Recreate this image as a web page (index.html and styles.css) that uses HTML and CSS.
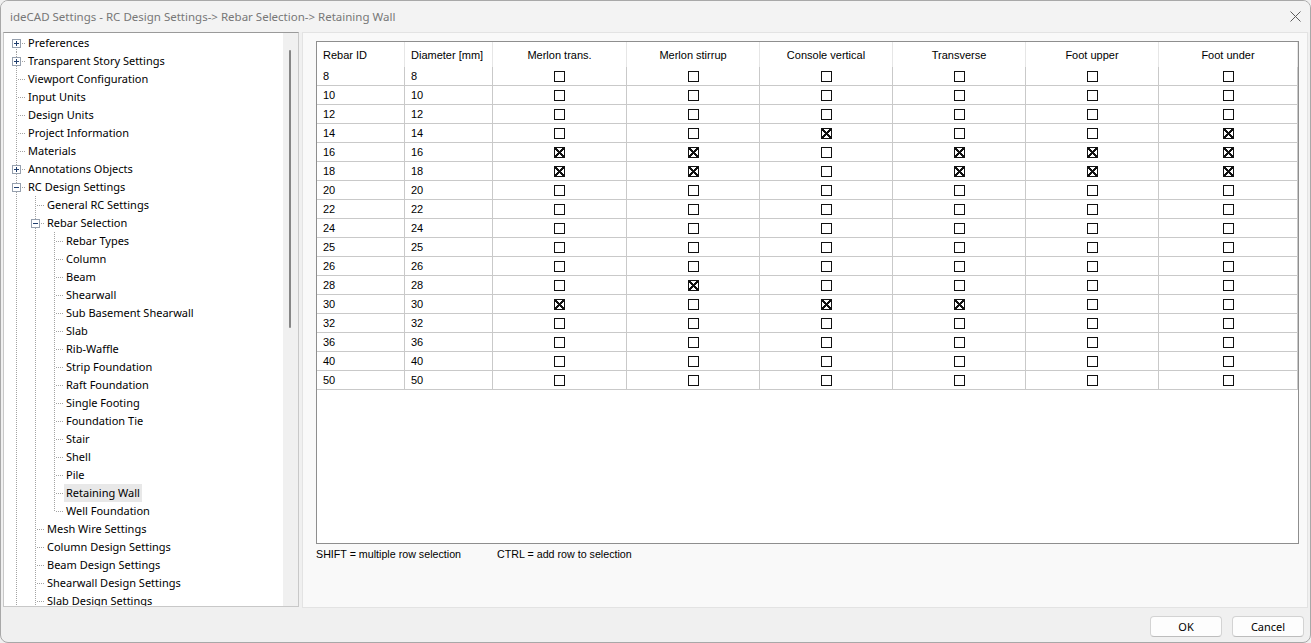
FILE: index.html
```html
<!DOCTYPE html>
<html lang="en">

<head>
    <meta charset="UTF-8" />
    <title>ideCAD Settings</title>
    <link rel="stylesheet" href="styles.css">
</head>

<body>
    <div class="window">
        <!-- Title bar -->
        <div class="titlebar">
            <span class="title">ideCAD Settings - RC Design Settings-&gt; Rebar Selection-&gt; Retaining Wall</span>
            <svg class="close" width="11" height="11" viewBox="0 0 11 11">
                <path d="M0.5 0.5 L10.5 10.5 M10.5 0.5 L0.5 10.5" stroke="#5c5c5c" stroke-width="1" fill="none" />
            </svg>
        </div>

        <div class="main">
            <!-- Settings tree -->
            <div class="tree-panel">
                <div class="tree">
                    <div class="node"><span class="g first"><i class="box plus"></i></span><span class="label">Preferences</span></div>
                    <div class="node"><span class="g tee"><i class="box plus"></i></span><span class="label">Transparent Story Settings</span></div>
                    <div class="node"><span class="g tee"></span><span class="label">Viewport Configuration</span></div>
                    <div class="node"><span class="g tee"></span><span class="label">Input Units</span></div>
                    <div class="node"><span class="g tee"></span><span class="label">Design Units</span></div>
                    <div class="node"><span class="g tee"></span><span class="label">Project Information</span></div>
                    <div class="node"><span class="g tee"></span><span class="label">Materials</span></div>
                    <div class="node"><span class="g tee"><i class="box plus"></i></span><span class="label">Annotations Objects</span></div>
                    <div class="node"><span class="g tee"><i class="box"></i></span><span class="label">RC Design Settings</span></div>
                    <div class="node"><span class="g pipe"></span><span class="g tee"></span><span class="label">General RC Settings</span></div>
                    <div class="node"><span class="g pipe"></span><span class="g tee"><i class="box"></i></span><span class="label">Rebar Selection</span></div>
                    <div class="node"><span class="g pipe"></span><span class="g pipe"></span><span class="g tee"></span><span class="label">Rebar Types</span></div>
                    <div class="node"><span class="g pipe"></span><span class="g pipe"></span><span class="g tee"></span><span class="label">Column</span></div>
                    <div class="node"><span class="g pipe"></span><span class="g pipe"></span><span class="g tee"></span><span class="label">Beam</span></div>
                    <div class="node"><span class="g pipe"></span><span class="g pipe"></span><span class="g tee"></span><span class="label">Shearwall</span></div>
                    <div class="node"><span class="g pipe"></span><span class="g pipe"></span><span class="g tee"></span><span class="label">Sub Basement Shearwall</span></div>
                    <div class="node"><span class="g pipe"></span><span class="g pipe"></span><span class="g tee"></span><span class="label">Slab</span></div>
                    <div class="node"><span class="g pipe"></span><span class="g pipe"></span><span class="g tee"></span><span class="label">Rib-Waffle</span></div>
                    <div class="node"><span class="g pipe"></span><span class="g pipe"></span><span class="g tee"></span><span class="label">Strip Foundation</span></div>
                    <div class="node"><span class="g pipe"></span><span class="g pipe"></span><span class="g tee"></span><span class="label">Raft Foundation</span></div>
                    <div class="node"><span class="g pipe"></span><span class="g pipe"></span><span class="g tee"></span><span class="label">Single Footing</span></div>
                    <div class="node"><span class="g pipe"></span><span class="g pipe"></span><span class="g tee"></span><span class="label">Foundation Tie</span></div>
                    <div class="node"><span class="g pipe"></span><span class="g pipe"></span><span class="g tee"></span><span class="label">Stair</span></div>
                    <div class="node"><span class="g pipe"></span><span class="g pipe"></span><span class="g tee"></span><span class="label">Shell</span></div>
                    <div class="node"><span class="g pipe"></span><span class="g pipe"></span><span class="g tee"></span><span class="label">Pile</span></div>
                    <div class="node"><span class="g pipe"></span><span class="g pipe"></span><span class="g tee"></span><span class="label selected">Retaining Wall</span></div>
                    <div class="node"><span class="g pipe"></span><span class="g pipe"></span><span class="g ell"></span><span class="label">Well Foundation</span></div>
                    <div class="node"><span class="g pipe"></span><span class="g tee"></span><span class="label">Mesh Wire Settings</span></div>
                    <div class="node"><span class="g pipe"></span><span class="g tee"></span><span class="label">Column Design Settings</span></div>
                    <div class="node"><span class="g pipe"></span><span class="g tee"></span><span class="label">Beam Design Settings</span></div>
                    <div class="node"><span class="g pipe"></span><span class="g tee"></span><span class="label">Shearwall Design Settings</span></div>
                    <div class="node"><span class="g pipe"></span><span class="g tee"></span><span class="label">Slab Design Settings</span></div>
                </div>
                <div class="scroll"><div class="thumb"></div></div>
            </div>

            <!-- Rebar selection page -->
            <div class="page">
                <div class="grid">
                    <table>
                        <colgroup>
                            <col class="w-id"><col class="w-dia"><col class="w-first"><col class="w-std"><col class="w-std"><col class="w-std"><col class="w-std"><col class="w-last">
                        </colgroup>
                        <thead>
                            <tr>
                                <th class="left">Rebar ID</th>
                                <th class="left">Diameter [mm]</th>
                                <th>Merlon trans.</th>
                                <th>Merlon stirrup</th>
                                <th>Console vertical</th>
                                <th>Transverse</th>
                                <th>Foot upper</th>
                                <th>Foot under</th>
                            </tr>
                        </thead>
                        <tbody>
                            <tr><td>8</td><td>8</td><td><i class="cb"></i></td><td><i class="cb"></i></td><td><i class="cb"></i></td><td><i class="cb"></i></td><td><i class="cb"></i></td><td><i class="cb"></i></td></tr>
                            <tr><td>10</td><td>10</td><td><i class="cb"></i></td><td><i class="cb"></i></td><td><i class="cb"></i></td><td><i class="cb"></i></td><td><i class="cb"></i></td><td><i class="cb"></i></td></tr>
                            <tr><td>12</td><td>12</td><td><i class="cb"></i></td><td><i class="cb"></i></td><td><i class="cb"></i></td><td><i class="cb"></i></td><td><i class="cb"></i></td><td><i class="cb"></i></td></tr>
                            <tr><td>14</td><td>14</td><td><i class="cb"></i></td><td><i class="cb"></i></td><td><i class="cb on"></i></td><td><i class="cb"></i></td><td><i class="cb"></i></td><td><i class="cb on"></i></td></tr>
                            <tr><td>16</td><td>16</td><td><i class="cb on"></i></td><td><i class="cb on"></i></td><td><i class="cb"></i></td><td><i class="cb on"></i></td><td><i class="cb on"></i></td><td><i class="cb on"></i></td></tr>
                            <tr><td>18</td><td>18</td><td><i class="cb on"></i></td><td><i class="cb on"></i></td><td><i class="cb"></i></td><td><i class="cb on"></i></td><td><i class="cb on"></i></td><td><i class="cb on"></i></td></tr>
                            <tr><td>20</td><td>20</td><td><i class="cb"></i></td><td><i class="cb"></i></td><td><i class="cb"></i></td><td><i class="cb"></i></td><td><i class="cb"></i></td><td><i class="cb"></i></td></tr>
                            <tr><td>22</td><td>22</td><td><i class="cb"></i></td><td><i class="cb"></i></td><td><i class="cb"></i></td><td><i class="cb"></i></td><td><i class="cb"></i></td><td><i class="cb"></i></td></tr>
                            <tr><td>24</td><td>24</td><td><i class="cb"></i></td><td><i class="cb"></i></td><td><i class="cb"></i></td><td><i class="cb"></i></td><td><i class="cb"></i></td><td><i class="cb"></i></td></tr>
                            <tr><td>25</td><td>25</td><td><i class="cb"></i></td><td><i class="cb"></i></td><td><i class="cb"></i></td><td><i class="cb"></i></td><td><i class="cb"></i></td><td><i class="cb"></i></td></tr>
                            <tr><td>26</td><td>26</td><td><i class="cb"></i></td><td><i class="cb"></i></td><td><i class="cb"></i></td><td><i class="cb"></i></td><td><i class="cb"></i></td><td><i class="cb"></i></td></tr>
                            <tr><td>28</td><td>28</td><td><i class="cb"></i></td><td><i class="cb on"></i></td><td><i class="cb"></i></td><td><i class="cb"></i></td><td><i class="cb"></i></td><td><i class="cb"></i></td></tr>
                            <tr><td>30</td><td>30</td><td><i class="cb on"></i></td><td><i class="cb"></i></td><td><i class="cb on"></i></td><td><i class="cb on"></i></td><td><i class="cb"></i></td><td><i class="cb"></i></td></tr>
                            <tr><td>32</td><td>32</td><td><i class="cb"></i></td><td><i class="cb"></i></td><td><i class="cb"></i></td><td><i class="cb"></i></td><td><i class="cb"></i></td><td><i class="cb"></i></td></tr>
                            <tr><td>36</td><td>36</td><td><i class="cb"></i></td><td><i class="cb"></i></td><td><i class="cb"></i></td><td><i class="cb"></i></td><td><i class="cb"></i></td><td><i class="cb"></i></td></tr>
                            <tr><td>40</td><td>40</td><td><i class="cb"></i></td><td><i class="cb"></i></td><td><i class="cb"></i></td><td><i class="cb"></i></td><td><i class="cb"></i></td><td><i class="cb"></i></td></tr>
                            <tr><td>50</td><td>50</td><td><i class="cb"></i></td><td><i class="cb"></i></td><td><i class="cb"></i></td><td><i class="cb"></i></td><td><i class="cb"></i></td><td><i class="cb"></i></td></tr>
                        </tbody>
                    </table>
                </div>
                <div class="hints">
                    <span class="hint-shift">SHIFT = multiple row selection</span>
                    <span>CTRL = add row to selection</span>
                </div>
            </div>
        </div>

        <!-- Dialog buttons -->
        <div class="footer">
            <button type="button">OK</button>
            <button type="button">Cancel</button>
        </div>
    </div>
</body>
</html>
```

FILE: styles.css
```css
/* Page */
html,
body {
    margin: 0;
    padding: 0;
    background: #f0f0f0;
}

/* Dialog window */
.window {
    width: 1311px;
    height: 643px;
    box-sizing: border-box;
    border: 1px solid #a8a8a8;
    border-radius: 8px;
    overflow: hidden;
    background: #f0f0f0;
    display: flex;
    flex-direction: column;
    font-family: 'Noto Sans', 'Liberation Sans', sans-serif;
    font-size: 11px;
    color: #000;
}

/* Title bar */
.titlebar {
    height: 31px;
    flex: none;
    display: flex;
    align-items: center;
    justify-content: space-between;
    padding: 0 9px 0 9px;
    background: #f3f3f3;
}

.title {
    color: #777;
    font-size: 11.5px;
}

.close {
    display: block;
}

/* Main area */
.main {
    flex: 1;
    display: flex;
    padding: 0 2px;
    gap: 3px;
    min-height: 0;
}

/* Tree panel */
.tree-panel {
    width: 296px;
    height: 575px;
    box-sizing: border-box;
    border: 1px solid #c8c8c8;
    border-top-color: #9a9a9a;
    background: #fff;
    display: flex;
    overflow: hidden;
}

.tree {
    flex: 1;
    padding: 1px 0 0 3px;
    overflow: hidden;
}

.node {
    height: 18px;
    display: flex;
    align-items: center;
    white-space: nowrap;
}

.label {
    padding: 0 2px;
    line-height: 18px;
}

.label.selected {
    background: #e8e8e8;
}

/* Tree guide lines */
.g {
    --dot-v: repeating-linear-gradient(to bottom, #a3a3a3 0 1px, transparent 1px 2px);
    --dot-h: repeating-linear-gradient(to right, #a3a3a3 0 1px, transparent 1px 2px);
    width: 19px;
    height: 18px;
    flex: none;
    display: flex;
    align-items: center;
}

.g.pipe {
    background: var(--dot-v) 9px 0 / 1px 18px no-repeat;
}

.g.tee {
    background: var(--dot-v) 9px 0 / 1px 18px no-repeat,
        var(--dot-h) 11px 9px / 8px 1px no-repeat;
}

.g.ell {
    background: var(--dot-v) 9px 0 / 1px 10px no-repeat,
        var(--dot-h) 11px 9px / 8px 1px no-repeat;
}

.g.first {
    background: var(--dot-v) 9px 9px / 1px 9px no-repeat,
        var(--dot-h) 11px 9px / 8px 1px no-repeat;
}

/* Expand / collapse box */
.box {
    width: 9px;
    height: 9px;
    box-sizing: border-box;
    margin: 1px 0 0 5px;
    border: 1px solid #96a0ae;
    background: linear-gradient(#213f6e, #213f6e) center / 5px 1px no-repeat, #fff;
}

.box.plus {
    background: linear-gradient(#213f6e, #213f6e) center / 5px 1px no-repeat,
        linear-gradient(#213f6e, #213f6e) center / 1px 5px no-repeat, #fff;
}

/* Thin scrollbar */
.scroll {
    width: 15px;
    flex: none;
    background: #f0f0f0;
    padding-top: 17px;
}

.thumb {
    width: 2px;
    height: 278px;
    margin-left: 6px;
    border-radius: 1px;
    background: #868686;
}

/* Right page */
.page {
    width: 1006px;
    height: 576px;
    box-sizing: border-box;
    border: 1px solid #e3e3e3;
    background: #f9f9f9;
    padding: 8px 0 0 13px;
}

.grid {
    width: 983px;
    height: 503px;
    box-sizing: border-box;
    border: 1px solid #8e8e8e;
    background: #fff;
}

table {
    width: 981px;
    table-layout: fixed;
    border-collapse: separate;
    border-spacing: 0;
    font-family: 'Liberation Sans', Arial, sans-serif;
    font-size: 11px;
}

.w-id { width: 88px; }
.w-dia { width: 88px; }
.w-first { width: 134px; }
.w-std { width: 133px; }
.w-last { width: 139px; }

th {
    height: 25px;
    padding: 0;
    font-weight: normal;
    text-align: center;
    border-right: 1px solid #e6e6e6;
}

th.left {
    text-align: left;
    padding-left: 6px;
}

td {
    height: 18px;
    padding: 0;
    line-height: 18px;
    text-align: center;
    border-right: 1px solid #c9c9c9;
    border-bottom: 1px solid #c9c9c9;
}

td:nth-child(1),
td:nth-child(2) {
    text-align: left;
    padding-left: 6px;
}

/* Grid checkboxes */
.cb {
    display: inline-block;
    width: 11px;
    height: 11px;
    box-sizing: border-box;
    border: 1px solid #111;
    vertical-align: -2px;
}

.cb.on {
    background: linear-gradient(45deg, transparent 42%, #111 42% 58%, transparent 58%),
        linear-gradient(-45deg, transparent 42%, #111 42% 58%, transparent 58%);
}

/* Key hints */
.hints {
    margin-top: 4px;
    font-family: 'Liberation Sans', Arial, sans-serif;
    font-size: 10.7px;
    line-height: 13px;
    display: flex;
}

.hint-shift {
    width: 181px;
}

/* Footer buttons */
.footer {
    height: 34px;
    flex: none;
    display: flex;
    justify-content: flex-end;
    align-items: flex-start;
    gap: 10px;
    padding: 8px 6px 0 0;
    box-sizing: border-box;
}

button {
    width: 72px;
    height: 21px;
    padding: 0;
    font-family: 'Noto Sans', 'Liberation Sans', sans-serif;
    font-size: 11px;
    color: #000;
    background: #fdfdfd;
    border: 1px solid #d3d3d3;
    border-bottom-color: #bdbdbd;
    border-radius: 4px;
}
```
